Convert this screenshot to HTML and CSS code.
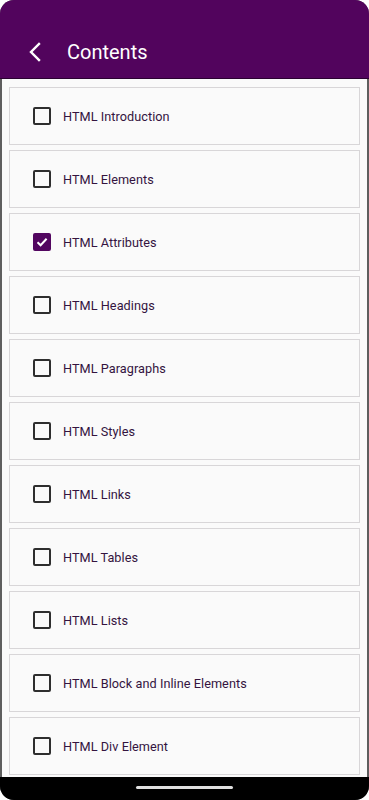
FILE: index.html
```html
<!DOCTYPE html>
<html>
<head>
<meta charset="utf-8">
<link rel="stylesheet" href="styles.css">
</head>
<body>
<div class="phone">
  <header class="appbar">
    <svg class="back" width="14" height="20" viewBox="0 0 14 20"><path d="M11 2 L3 10 L11 18" fill="none" stroke="#fff" stroke-width="2.4" stroke-linecap="square"/></svg>
    <span class="title">Contents</span>
  </header>
  <main class="list">
    <div class="card"><span class="box"></span><span class="label">HTML Introduction</span></div>
    <div class="card"><span class="box"></span><span class="label">HTML Elements</span></div>
    <div class="card"><span class="box checked"><svg width="14" height="14" viewBox="0 0 14 14"><path d="M2.5 7.2 L5.6 10.2 L11.6 3.8" fill="none" stroke="#fff" stroke-width="2"/></svg></span><span class="label">HTML Attributes</span></div>
    <div class="card"><span class="box"></span><span class="label">HTML Headings</span></div>
    <div class="card"><span class="box"></span><span class="label">HTML Paragraphs</span></div>
    <div class="card"><span class="box"></span><span class="label">HTML Styles</span></div>
    <div class="card"><span class="box"></span><span class="label">HTML Links</span></div>
    <div class="card"><span class="box"></span><span class="label">HTML Tables</span></div>
    <div class="card"><span class="box"></span><span class="label">HTML Lists</span></div>
    <div class="card"><span class="box"></span><span class="label">HTML Block and Inline Elements</span></div>
    <div class="card"><span class="box"></span><span class="label">HTML Div Element</span></div>
  </main>
  <footer class="navbar"><span class="pill"></span></footer>
</div>
</body>
</html>
```
FILE: styles.css
```css
* { box-sizing: border-box; }
html, body { margin: 0; padding: 0; background: #ffffff; }
body { font-family: Roboto, "Noto Sans", sans-serif; }
.phone {
  width: 369px;
  height: 800px;
  border-radius: 14px;
  overflow: hidden;
  background: #5e5e5e;
  display: flex;
  flex-direction: column;
}
.appbar {
  height: 79px;
  flex: none;
  background: #52045d;
  border-bottom: 1px solid #2b0231;
  display: flex;
  align-items: center;
  padding: 26px 0 0 28px;
  gap: 25px;
}
.back { display: block; }
.title {
  color: #ffffff;
  font-size: 20px;
  line-height: 24px;
}
.list {
  flex: 1;
  margin: 0 2px;
  background: #fafafa;
  padding: 8px 7px 0 7px;
  display: flex;
  flex-direction: column;
  gap: 5px;
  overflow: hidden;
}
.card {
  height: 58px;
  flex: none;
  border: 1px solid #d8d6d8;
  background: #fafafa;
  display: flex;
  align-items: center;
  padding-left: 23px;
  gap: 12px;
}
.box {
  width: 18px;
  height: 18px;
  border: 2px solid #2e2e2e;
  border-radius: 2px;
  display: flex;
  align-items: center;
  justify-content: center;
}
.box.checked {
  background: #520660;
  border-color: #520660;
}
.label {
  color: #34143f;
  font-size: 12.7px;
  letter-spacing: 0.05px;
}
.navbar {
  height: 23px;
  flex: none;
  background: #000;
  display: flex;
  justify-content: center;
  padding-top: 9px;
}
.pill {
  width: 97px;
  height: 3px;
  border-radius: 2px;
  background: #e0e0e0;
}
```
